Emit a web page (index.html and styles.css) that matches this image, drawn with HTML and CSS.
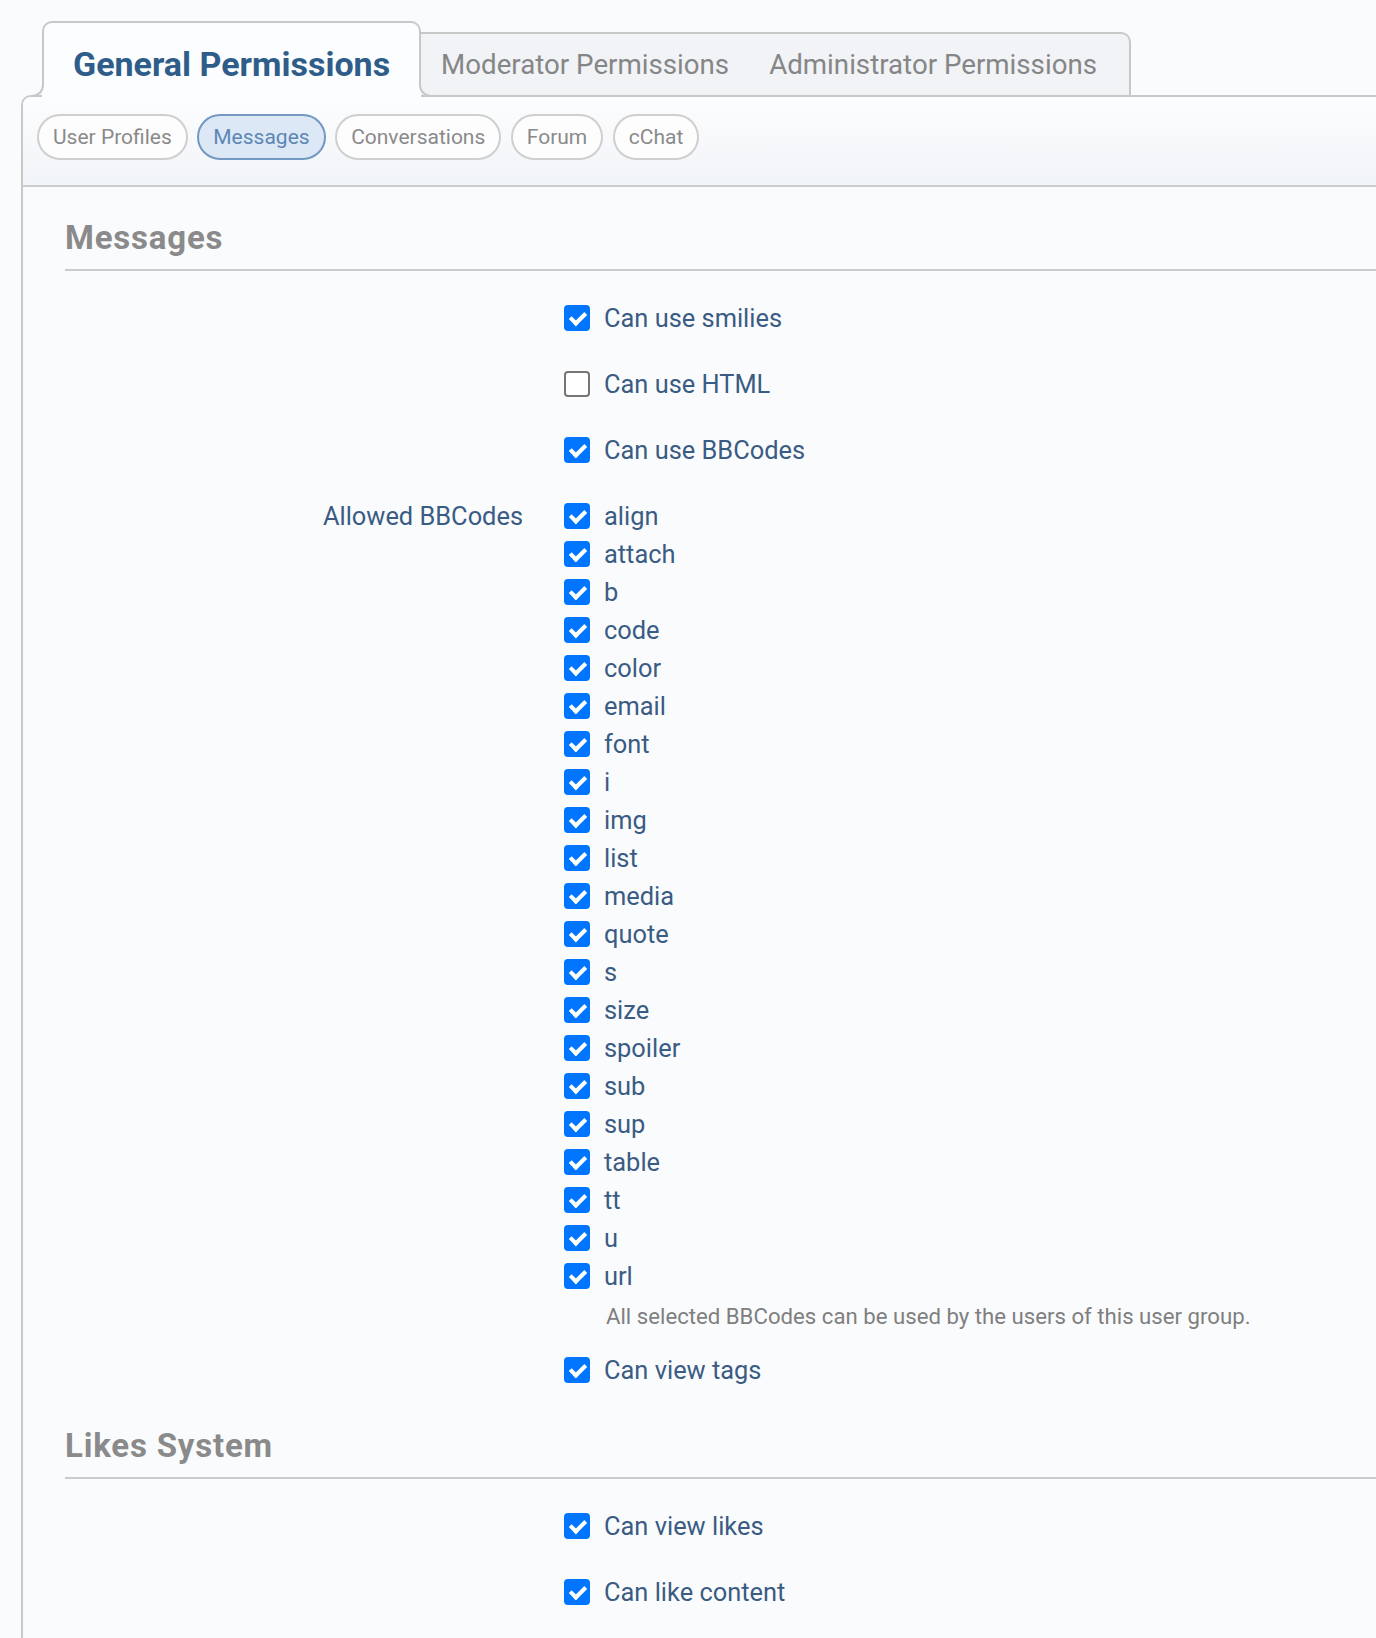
FILE: index.html
```html
<!DOCTYPE html>
<html lang="en">
<head>
    <meta charset="UTF-8">
    <title>User group permissions</title>
    <link rel="stylesheet" href="styles.css">
</head>
<body>

    <div class="page">
        <!-- top tabs -->
        <div class="tabs">
            <a class="tab tab-active">General Permissions</a>
            <div class="tab-group">
                <a class="tab">Moderator Permissions</a>
                <a class="tab">Administrator Permissions</a>
            </div>
        </div>

        <div class="panel">
            <div class="subtabs">
                <a class="pill">User Profiles</a>
                <a class="pill is-active">Messages</a>
                <a class="pill">Conversations</a>
                <a class="pill">Forum</a>
                <a class="pill">cChat</a>
            </div>

            <div class="panel-body">
                <h3 class="section-title">Messages</h3>

                <div class="form-row">
                    <div class="form-label"></div>
                    <div class="form-input">
                        <label class="check"><input type="checkbox" checked> Can use smilies</label>
                    </div>
                </div>
                <div class="form-row">
                    <div class="form-label"></div>
                    <div class="form-input">
                        <label class="check"><input type="checkbox"> Can use HTML</label>
                    </div>
                </div>
                <div class="form-row">
                    <div class="form-label"></div>
                    <div class="form-input">
                        <label class="check"><input type="checkbox" checked> Can use BBCodes</label>
                    </div>
                </div>
                <div class="form-row">
                    <div class="form-label">Allowed BBCodes</div>
                    <div class="form-input">
                        <label class="check"><input type="checkbox" checked> align</label>
                        <label class="check"><input type="checkbox" checked> attach</label>
                        <label class="check"><input type="checkbox" checked> b</label>
                        <label class="check"><input type="checkbox" checked> code</label>
                        <label class="check"><input type="checkbox" checked> color</label>
                        <label class="check"><input type="checkbox" checked> email</label>
                        <label class="check"><input type="checkbox" checked> font</label>
                        <label class="check"><input type="checkbox" checked> i</label>
                        <label class="check"><input type="checkbox" checked> img</label>
                        <label class="check"><input type="checkbox" checked> list</label>
                        <label class="check"><input type="checkbox" checked> media</label>
                        <label class="check"><input type="checkbox" checked> quote</label>
                        <label class="check"><input type="checkbox" checked> s</label>
                        <label class="check"><input type="checkbox" checked> size</label>
                        <label class="check"><input type="checkbox" checked> spoiler</label>
                        <label class="check"><input type="checkbox" checked> sub</label>
                        <label class="check"><input type="checkbox" checked> sup</label>
                        <label class="check"><input type="checkbox" checked> table</label>
                        <label class="check"><input type="checkbox" checked> tt</label>
                        <label class="check"><input type="checkbox" checked> u</label>
                        <label class="check"><input type="checkbox" checked> url</label>
                        <div class="hint">All selected BBCodes can be used by the users of this user group.</div>
                    </div>
                </div>
                <div class="form-row">
                    <div class="form-label"></div>
                    <div class="form-input">
                        <label class="check"><input type="checkbox" checked> Can view tags</label>
                    </div>
                </div>

                <h3 class="section-title">Likes System</h3>

                <div class="form-row">
                    <div class="form-label"></div>
                    <div class="form-input">
                        <label class="check"><input type="checkbox" checked> Can view likes</label>
                    </div>
                </div>
                <div class="form-row">
                    <div class="form-label"></div>
                    <div class="form-input">
                        <label class="check"><input type="checkbox" checked> Can like content</label>
                    </div>
                </div>
            </div>
        </div>
    </div>

</body>
</html>
```

FILE: styles.css
```css
/* page */
html, body {
    margin: 0;
}

body {
    background: #fafbfd;
    font-family: Roboto, "Liberation Sans", sans-serif;
    color: #3a5b83;
    overflow-x: hidden;
}

.page {
    padding: 21px 0 0 21px;
}

/* top tabs */
.tabs {
    display: flex;
    align-items: flex-end;
    height: 74px;
    margin-left: 21px;
}

.tab {
    display: block;
    line-height: 40px;
    white-space: nowrap;
    cursor: pointer;
}

.tab-active {
    position: relative;
    z-index: 1;
    padding: 21px 29px 3px;
    margin-bottom: 8px;
    font-size: 34px;
    font-weight: 700;
    color: #2f5d8a;
    background: #fcfdfe;
    border: 2px solid #c8c8c8;
    border-bottom: 0;
    border-radius: 10px 10px 0 0;
    box-shadow: 0 10px 0 #fcfdfe;
}

/* little flares where the tab meets the panel */
.tab-active::before,
.tab-active::after {
    content: '';
    position: absolute;
    bottom: -10px;
    width: 10px;
    height: 10px;
    border-bottom: 2px solid #c8c8c8;
}

.tab-active::before {
    left: -12px;
    border-right: 2px solid #c8c8c8;
    border-bottom-right-radius: 12px;
}

.tab-active::after {
    right: -12px;
    border-left: 2px solid #c8c8c8;
    border-bottom-left-radius: 12px;
}

.tab-group {
    display: flex;
    padding: 11px 12px 10px 0;
    background: #f1f3f6;
    border: 2px solid #c8c8c8;
    border-left: 0;
    border-bottom: 0;
    border-radius: 0 10px 0 0;
}

.tab-group .tab {
    padding: 0 20px;
    font-size: 27.7px;
    color: #868686;
}

/* panel */
.panel {
    min-height: 1500px;
    background: #fafbfd;
    border: 2px solid #c8c8c8;
    border-right: 0;
    border-bottom: 0;
    border-radius: 10px 0 0 0;
    overflow: hidden;
}

.subtabs {
    display: flex;
    gap: 9.5px;
    padding: 17px 14px 25px;
    background: linear-gradient(#fcfdfe, #f1f4f8);
    border-bottom: 2px solid #cdcdcd;
}

.pill {
    font-size: 21px;
    line-height: 42px;
    padding: 0 14px;
    color: #8a8a8a;
    background: #fdfdfe;
    border: 2px solid #cfcfcf;
    border-radius: 23px;
    cursor: pointer;
}

.pill.is-active {
    color: #5c86b5;
    background: #dce8f6;
    border-color: #7398c2;
}

.panel-body {
    padding: 31px 0 40px 42px;
}

/* section headers */
.section-title {
    margin: 0 0 14px;
    padding-bottom: 11px;
    font-size: 33px;
    line-height: 40px;
    font-weight: 700;
    letter-spacing: 0.8px;
    color: #8a8a8a;
    border-bottom: 2px solid #cbcbcb;
}

.form-row + .section-title {
    margin-top: 23px;
}

/* form rows */
.form-row {
    display: grid;
    grid-template-columns: 458px 1fr;
    column-gap: 41px;
    padding: 14px 0;
}

.form-label {
    text-align: right;
    font-size: 25.4px;
    line-height: 38px;
}

.check {
    display: flex;
    align-items: center;
    gap: 14px;
    font-size: 25.4px;
    line-height: 38px;
    cursor: pointer;
}

.check input {
    -webkit-appearance: none;
    appearance: none;
    position: relative;
    flex: none;
    width: 26px;
    height: 26px;
    margin: 0;
    background: #fff;
    border: 2px solid #767676;
    border-radius: 4px;
}

.check input:checked {
    background: #0075ff;
    border-color: #0075ff;
}

.check input:checked::after {
    content: '';
    position: absolute;
    left: 7px;
    top: 2px;
    width: 6px;
    height: 12px;
    border: solid #fff;
    border-width: 0 4px 4px 0;
    transform: rotate(45deg);
}

.hint {
    margin: 10px 0 -4px;
    padding-left: 42px;
    font-size: 22.2px;
    line-height: 22px;
    color: #7f7f7f;
}
```
